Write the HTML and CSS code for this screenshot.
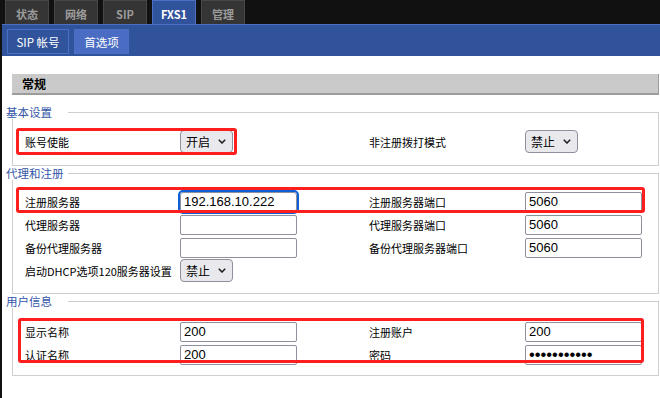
FILE: index.html
```html
<!DOCTYPE html>
<html lang="zh-CN">
<head>
    <meta charset="UTF-8">
    <meta name="viewport" content="width=device-width, initial-scale=1.0">
    <title>FXS1 - 首选项</title>
    <link rel="stylesheet" href="styles.css">
</head>
<body>
    <!-- Main tabs -->
    <nav class="topnav">
        <a class="tab" href="#">状态</a>
        <a class="tab" href="#">网络</a>
        <a class="tab" href="#">SIP</a>
        <a class="tab active" href="#">FXS1</a>
        <a class="tab" href="#">管理</a>
    </nav>

    <!-- Sub tabs -->
    <div class="subnav">
        <a class="subtab sip" href="#">SIP 帐号</a>
        <a class="subtab current" href="#">首选项</a>
    </div>

    <div class="main">
        <div class="section-title">常规</div>

        <fieldset>
            <legend>基本设置</legend>
            <div class="row row-tall">
                <span>账号使能</span>
                <span class="sel">
                    <select><option>开启</option><option>禁止</option></select>
                    <svg class="chev" width="8" height="5" viewBox="0 0 8 5"><path d="M0.8 0.8 L4 4 L7.2 0.8" fill="none" stroke="#1a1a1a" stroke-width="1.5"/></svg>
                </span>
                <span>非注册拨打模式</span>
                <span class="sel">
                    <select><option>禁止</option><option>开启</option></select>
                    <svg class="chev" width="8" height="5" viewBox="0 0 8 5"><path d="M0.8 0.8 L4 4 L7.2 0.8" fill="none" stroke="#1a1a1a" stroke-width="1.5"/></svg>
                </span>
                <div class="mark mark-a"></div>
            </div>
        </fieldset>

        <fieldset>
            <legend>代理和注册</legend>
            <div class="row">
                <span>注册服务器</span>
                <span><input type="text" class="focus" value="192.168.10.222"></span>
                <span>注册服务器端口</span>
                <span><input type="text" value="5060"></span>
                <div class="mark mark-b"></div>
            </div>
            <div class="row">
                <span>代理服务器</span>
                <span><input type="text" value=""></span>
                <span>代理服务器端口</span>
                <span><input type="text" value="5060"></span>
            </div>
            <div class="row">
                <span>备份代理服务器</span>
                <span><input type="text" value=""></span>
                <span>备份代理服务器端口</span>
                <span><input type="text" value="5060"></span>
            </div>
            <div class="row">
                <span>启动DHCP选项120服务器设置</span>
                <span class="sel">
                    <select><option>禁止</option><option>开启</option></select>
                    <svg class="chev" width="8" height="5" viewBox="0 0 8 5"><path d="M0.8 0.8 L4 4 L7.2 0.8" fill="none" stroke="#1a1a1a" stroke-width="1.5"/></svg>
                </span>
            </div>
        </fieldset>

        <fieldset class="user">
            <legend>用户信息</legend>
            <div class="group">
                <div class="row">
                    <span>显示名称</span>
                    <span><input type="text" value="200"></span>
                    <span>注册账户</span>
                    <span><input type="text" value="200"></span>
                </div>
                <div class="row">
                    <span>认证名称</span>
                    <span><input type="text" value="200"></span>
                    <span>密码</span>
                    <span><input type="password" class="pw" value="12345678901"></span>
                </div>
                <div class="mark mark-c"></div>
            </div>
        </fieldset>
    </div>
</body>
</html>
```

FILE: styles.css
```css
/* General */
body {
    margin: 0;
    min-height: 100vh;
    box-sizing: border-box;
    border-left: 2px solid #111;
    background-color: #fff;
    font-family: "Noto Sans CJK SC", "Noto Sans", sans-serif;
    font-size: 11px;
    color: #000;
    overflow: hidden;
}

a { text-decoration: none; }

/* Main tabs */
.topnav {
    display: flex;
    gap: 5px;
    height: 24px;
    padding-left: 3px;
    background-color: #111;
}

.tab {
    width: 44px;
    height: 24px;
    box-sizing: border-box;
    border: 1px solid #474747;
    border-bottom: none;
    background-color: #353535;
    color: #9b9b9b;
    font-weight: bold;
    font-size: 11px;
    line-height: 26px;
    text-align: center;
}

.tab.active {
    background-color: #31539b;
    border-color: #4a6fc4;
    color: #fff;
}

/* Sub tabs */
.subnav {
    display: flex;
    gap: 5px;
    height: 32px;
    box-sizing: border-box;
    padding: 4px 0 0 5px;
    border-top: 1px solid #4a6fc4;
    background-color: #31539b;
}

.subtab {
    height: 25px;
    box-sizing: border-box;
    border: 1px solid #4a6fc4;
    color: #fff;
    font-size: 11.5px;
    line-height: 24px;
    text-align: center;
}

.subtab.sip { width: 62px; }

.subtab.current {
    width: 55px;
    background-color: #4a6cc2;
}

/* Content */
.main {
    padding: 18px 1px 0 10px;
}

.section-title {
    height: 21px;
    box-sizing: border-box;
    padding-left: 10px;
    background-color: #cacaca;
    border-bottom: 2px solid #9c9c9c;
    border-right: 1px solid #9c9c9c;
    font-size: 12px;
    font-weight: bold;
    line-height: 19px;
}

fieldset {
    margin: 0;
    padding: 10px 12px 11px 12px;
    border: 1px solid #cfcfcf;
    min-width: 0;
}

.section-title + fieldset { margin-top: 10px; }

fieldset.user { padding-top: 12px; padding-bottom: 9px; }

legend {
    width: 62px;
    box-sizing: border-box;
    margin-left: -19px;
    padding: 0;
    background-color: #fff;
    color: #3556a8;
    font-size: 11.5px;
    line-height: 14px;
}

.row {
    position: relative;
    display: grid;
    grid-template-columns: 155px 189px 156px 1fr;
    align-items: center;
    height: 23px;
}

.row-tall { height: 25px; }

.group { position: relative; }

/* Form controls */
input {
    width: 117px;
    height: 20px;
    box-sizing: border-box;
    margin: 0;
    padding: 0 3px;
    border: 1px solid #8f8f9d;
    border-radius: 2px;
    font-family: "Liberation Sans", Arial, sans-serif;
    font-size: 13px;
    color: #000;
    vertical-align: middle;
}

input.focus {
    outline: 2px solid #0c5fd6;
    outline-offset: 0;
    border-radius: 3px;
}

input.pw {
    font-size: 16.5px;
    letter-spacing: 0;
}

.sel {
    position: relative;
    display: inline-block;
    width: 53px;
    height: 23px;
}

select {
    appearance: none;
    width: 53px;
    height: 23px;
    margin: 0;
    padding: 0 0 0 5px;
    border: 1px solid #8f8f9d;
    border-radius: 4px;
    background-color: #e9e9ed;
    font-family: "Noto Sans CJK SC", sans-serif;
    font-size: 12px;
    color: #000;
}

.chev {
    position: absolute;
    right: 7px;
    top: 9px;
    pointer-events: none;
}

/* Red highlight boxes */
.mark {
    position: absolute;
    box-sizing: border-box;
    border: 3px solid #ff1e1e;
    border-radius: 3px;
    pointer-events: none;
}

.mark-a { left: -9px; width: 221px; top: -1px; height: 27px; }
.mark-b { left: -9px; right: 1px; top: -3px; height: 26px; }
.mark-c { left: -7px; right: 2px; top: -2px; height: 45px; }
```
